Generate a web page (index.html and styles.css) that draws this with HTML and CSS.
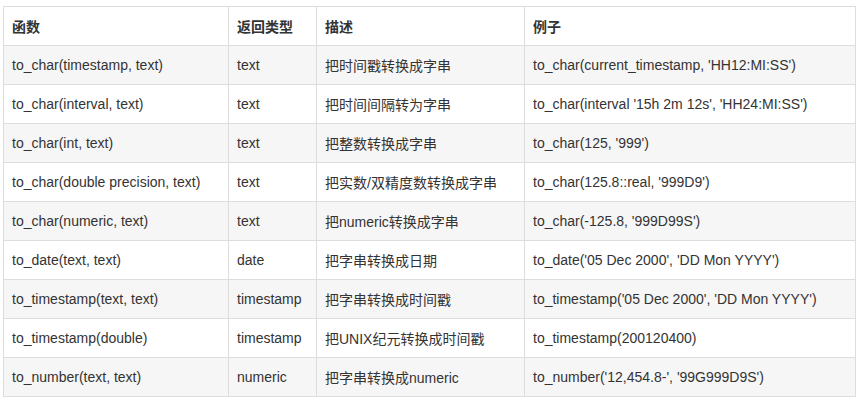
FILE: index.html
```html
<!DOCTYPE html>
<html lang="zh">
<head>
<meta charset="utf-8">
<link rel="stylesheet" href="styles.css">
</head>
<body>
<div class="wrap">
<table class="fn-table">
  <colgroup>
    <col class="c1"><col class="c2"><col class="c3"><col class="c4">
  </colgroup>
  <thead>
    <tr><th>函数</th><th>返回类型</th><th>描述</th><th>例子</th></tr>
  </thead>
  <tbody>
    <tr><td>to_char(timestamp, text)</td><td>text</td><td>把时间戳转换成字串</td><td>to_char(current_timestamp, 'HH12:MI:SS')</td></tr>
    <tr><td>to_char(interval, text)</td><td>text</td><td>把时间间隔转为字串</td><td>to_char(interval '15h 2m 12s', 'HH24:MI:SS')</td></tr>
    <tr><td>to_char(int, text)</td><td>text</td><td>把整数转换成字串</td><td>to_char(125, '999')</td></tr>
    <tr><td>to_char(double precision, text)</td><td>text</td><td>把实数/双精度数转换成字串</td><td>to_char(125.8::real, '999D9')</td></tr>
    <tr><td>to_char(numeric, text)</td><td>text</td><td>把numeric转换成字串</td><td>to_char(-125.8, '999D99S')</td></tr>
    <tr><td>to_date(text, text)</td><td>date</td><td>把字串转换成日期</td><td>to_date('05 Dec 2000', 'DD Mon YYYY')</td></tr>
    <tr><td>to_timestamp(text, text)</td><td>timestamp</td><td>把字串转换成时间戳</td><td>to_timestamp('05 Dec 2000', 'DD Mon YYYY')</td></tr>
    <tr><td>to_timestamp(double)</td><td>timestamp</td><td>把UNIX纪元转换成时间戳</td><td>to_timestamp(200120400)</td></tr>
    <tr><td>to_number(text, text)</td><td>numeric</td><td>把字串转换成numeric</td><td>to_number('12,454.8-', '99G999D9S')</td></tr>
  </tbody>
</table>
</div>
</body>
</html>
```
FILE: styles.css
```css
html, body {
  margin: 0;
  padding: 0;
  background: #fff;
}
.wrap {
  padding: 6px 4px 0 3px;
}
.fn-table {
  border-collapse: collapse;
  table-layout: fixed;
  width: 852px;
  font-family: "Liberation Sans", Arial, "Noto Sans CJK SC", sans-serif;
  font-size: 14px;
  color: #333;
}
.c1 { width: 225px; }
.c2 { width: 88px; }
.c3 { width: 208px; }
.c4 { width: 331px; }
.fn-table th,
.fn-table td {
  border: 1px solid #ddd;
  height: 39px;
  padding: 0 8px;
  text-align: left;
  vertical-align: middle;
  white-space: nowrap;
  box-sizing: border-box;
}
.fn-table th {
  font-weight: bold;
}
.fn-table tbody tr:nth-child(odd) {
  background: #f6f6f6;
}
```
